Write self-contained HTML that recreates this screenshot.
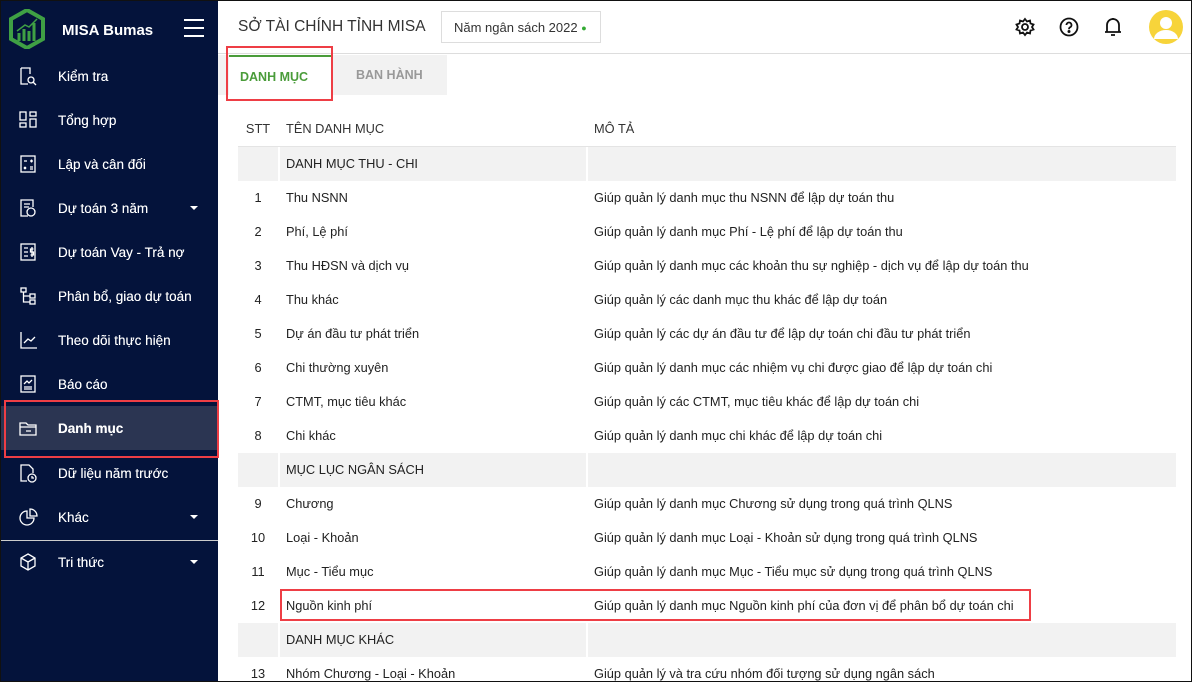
<!DOCTYPE html>
<html><head><meta charset="utf-8"><style>
*{margin:0;padding:0;box-sizing:border-box}
body{width:1192px;height:682px;overflow:hidden;font-family:"Liberation Sans",sans-serif;background:#fff;position:relative;color:#222}
.frame{position:absolute;inset:0;border:1px solid #111;z-index:10;pointer-events:none}
.side{position:absolute;left:0;top:0;width:218px;height:682px;background:#04133b;color:#fff}
.logo{position:absolute;left:9px;top:9px}
.brand{position:absolute;left:62px;top:22px;font-weight:bold;font-size:15px}
.ham{position:absolute;left:184px;top:19px;width:20px}
.ham i{display:block;height:2px;background:#fff;margin-bottom:6px}
.item{position:absolute;left:0;width:218px;height:44px;font-size:13.5px;display:flex;align-items:center;text-shadow:0 0 .3px #fff}
.item span{position:absolute;left:58px}
.item svg{position:absolute;left:18px}
.item .car{position:absolute;left:190px;width:0;height:0;border-left:4px solid transparent;border-right:4px solid transparent;border-top:4px solid #fff}
.sel{background:#2b3552;font-weight:bold}
.hdr{position:absolute;left:218px;top:0;right:0;height:54px;border-bottom:1px solid #ddd}
.title{position:absolute;left:20px;top:18px;font-size:15.5px;color:#333}
.year{position:absolute;left:223px;top:11px;width:160px;height:32px;border:1px solid #ddd;font-size:13px;padding:8px 12px;color:#333;white-space:nowrap}
.tabs{position:absolute;left:218px;top:55px;width:229px;height:40px;background:#f2f2f2}
.t1{position:absolute;left:11px;top:0;width:102px;height:40px;border-top:2px solid #4a9c3a;background:#fff;color:#4a9c3a;font-weight:bold;font-size:12.5px;padding-top:13px;padding-left:11px}
.t2{position:absolute;left:138px;top:13px;color:#999;font-weight:bold;font-size:12.5px}
.tbl{position:absolute;left:238px;top:111px;width:938px;font-size:12.8px}
.r{position:relative;height:34px;line-height:34px}
.r .a{position:absolute;left:0;width:40px;text-align:center}
.r .b{position:absolute;left:48px}
.r .c{position:absolute;left:356px}
.g{background:#f2f2f2}
.g .b{border-left:2px solid #fff;left:40px;padding-left:6px;width:308px;height:34px}
.g .c{border-left:2px solid #fff;left:348px;width:2px;height:34px}
.hd{height:36px;line-height:36px;border-bottom:1px solid #e4e4e4;color:#333}
.box{position:absolute;border:2px solid #ee3e45;z-index:5}
</style></head><body>
<div class="side">
<svg class="logo" width="36" height="40" viewBox="0 0 36 40"><path d="M18 1 L34 10 V30 L18 39 L2 30 V10 Z" fill="none" stroke="#3fa044" stroke-width="4"/><path d="M10 32V24M15 32V20M20 32V22M25 32V14" stroke="#3fa044" stroke-width="3"/><path d="M8 22 L16 16 L20 18 L28 10" stroke="#3fa044" stroke-width="1.5" fill="none"/></svg>
<div class="brand">MISA Bumas</div>
<div class="ham"><i></i><i></i><i></i></div>
<div class="item" style="top:54px"><svg width="20" height="20" fill="none" stroke="#fff" stroke-width="1.3"><path d="M3 2h9v6M3 2v16h7"/><circle cx="13" cy="14" r="3"/><path d="M15 16l3 3"/></svg><span>Kiểm tra</span></div>
<div class="item" style="top:98px"><svg width="20" height="20" fill="none" stroke="#fff" stroke-width="1.3"><rect x="2" y="2" width="6" height="8"/><rect x="12" y="2" width="6" height="4"/><rect x="2" y="13" width="6" height="4"/><rect x="12" y="9" width="6" height="8"/></svg><span>Tổng hợp</span></div>
<div class="item" style="top:142px"><svg width="20" height="20" fill="none" stroke="#fff" stroke-width="1.3"><rect x="3" y="2" width="14" height="16"/><path d="M6 7h3M12 7h3M13.5 5.5v3M6 13l2 2M8 13l-2 2M12 13h3M12 15h3"/></svg><span>Lập và cân đối</span></div>
<div class="item" style="top:186px"><svg width="20" height="20" fill="none" stroke="#fff" stroke-width="1.3"><path d="M10 18H3V2h12v7M6 6h6M6 9h5"/><circle cx="13" cy="14" r="4"/></svg><span>Dự toán 3 năm</span><i class="car"></i></div>
<div class="item" style="top:230px"><svg width="20" height="20" fill="none" stroke="#fff" stroke-width="1.3"><rect x="3" y="2" width="14" height="16"/><path d="M6 6h4M6 10h4M6 14h4M14 5v10M15.5 7h-3v3h3v3h-3"/></svg><span>Dự toán Vay - Trả nợ</span></div>
<div class="item" style="top:274px"><svg width="20" height="20" fill="none" stroke="#fff" stroke-width="1.3"><rect x="3" y="2" width="5" height="4"/><path d="M5.5 6v10h6M5.5 10h6"/><rect x="12" y="8" width="5" height="4"/><rect x="12" y="14" width="5" height="4"/></svg><span>Phân bổ, giao dự toán</span></div>
<div class="item" style="top:318px"><svg width="20" height="20" fill="none" stroke="#fff" stroke-width="1.3"><path d="M3 2v16h16M6 13l4-4 3 2 4-4"/></svg><span>Theo dõi thực hiện</span></div>
<div class="item" style="top:362px"><svg width="20" height="20" fill="none" stroke="#fff" stroke-width="1.3"><rect x="3" y="2" width="14" height="16"/><path d="M6 10l3-3 2 2 3-3M6 13h8M6 15h8"/></svg><span>Báo cáo</span></div>
<div class="item sel" style="top:406px"><svg width="20" height="20" fill="none" stroke="#fff" stroke-width="1.3"><path d="M2 17V5h6l2 2h8v10z M2 9h16M8 13h5"/></svg><span>Danh mục</span></div>
<div class="item" style="top:451px"><svg width="20" height="20" fill="none" stroke="#fff" stroke-width="1.3"><path d="M9 18H3V2h8l4 4v4"/><circle cx="14" cy="15" r="4"/><path d="M14 13v2h2"/></svg><span>Dữ liệu năm trước</span></div>
<div class="item" style="top:495px"><svg width="20" height="20" fill="none" stroke="#fff" stroke-width="1.3"><path d="M9 4a7 7 0 1 0 7 7H9z M12 2v7h7a7 7 0 0 0-7-7z"/></svg><span>Khác</span><i class="car"></i></div>
<div style="position:absolute;left:0;top:540px;width:218px;height:1px;background:#ccc"></div>
<div class="item" style="top:540px"><svg width="20" height="20" fill="none" stroke="#fff" stroke-width="1.3"><path d="M10 2l7 4v8l-7 4-7-4V6z M3 6l7 4 7-4M10 10v8"/></svg><span>Tri thức</span><i class="car"></i></div>
</div>
<div class="hdr">
<div class="title">SỞ TÀI CHÍNH TỈNH MISA</div>
<div class="year">Năm ngân sách 2022 <span style="color:#3a3;font-size:9px;vertical-align:1px">●</span></div>
<svg style="position:absolute;left:797px;top:17px" width="20" height="20" fill="none" stroke="#111" stroke-width="1.8"><circle cx="10" cy="10" r="3"/><path d="M10 2l2 2.5 3-1 .5 3 3 1-1.5 2.5 1.5 2.5-3 1-.5 3-3-1-2 2.5-2-2.5-3 1-.5-3-3-1L3 10 1.5 7.5l3-1 .5-3 3 1z"/></svg>
<svg style="position:absolute;left:841px;top:17px" width="20" height="20" fill="none" stroke="#111" stroke-width="1.8"><circle cx="10" cy="10" r="8.5"/><path d="M7.5 8a2.5 2.5 0 1 1 3.5 2.3c-.8.4-1 1-1 2"/><circle cx="10" cy="14.5" r=".6" fill="#111"/></svg>
<svg style="position:absolute;left:885px;top:16px" width="20" height="22" fill="none" stroke="#111" stroke-width="1.8"><path d="M4 16V9a6 6 0 0 1 12 0v7zM2 16h16M8 19h4M10 2v1"/></svg>
<svg style="position:absolute;left:931px;top:10px" width="34" height="34"><circle cx="17" cy="17" r="17" fill="#f7d43a"/><circle cx="17" cy="13" r="6" fill="#fff"/><path d="M5 29a12 9 0 0 1 24 0z" fill="#fff"/></svg>
</div>
<div class="tabs"><div class="t1">DANH MỤC</div><div class="t2">BAN HÀNH</div></div>
<div class="tbl">
<div class="r hd"><span class="a">STT</span><span class="b">TÊN DANH MỤC</span><span class="c">MÔ TẢ</span></div>
<div class="r g"><span class="b">DANH MỤC THU - CHI</span><span class="c"></span></div>
<div class="r"><span class="a">1</span><span class="b">Thu NSNN</span><span class="c">Giúp quản lý danh mục thu NSNN để lập dự toán thu</span></div>
<div class="r"><span class="a">2</span><span class="b">Phí, Lệ phí</span><span class="c">Giúp quản lý danh mục Phí - Lệ phí để lập dự toán thu</span></div>
<div class="r"><span class="a">3</span><span class="b">Thu HĐSN và dịch vụ</span><span class="c">Giúp quản lý danh mục các khoản thu sự nghiệp - dịch vụ để lập dự toán thu</span></div>
<div class="r"><span class="a">4</span><span class="b">Thu khác</span><span class="c">Giúp quản lý các danh mục thu khác để lập dự toán</span></div>
<div class="r"><span class="a">5</span><span class="b">Dự án đầu tư phát triển</span><span class="c">Giúp quản lý các dự án đầu tư để lập dự toán chi đầu tư phát triển</span></div>
<div class="r"><span class="a">6</span><span class="b">Chi thường xuyên</span><span class="c">Giúp quản lý danh mục các nhiệm vụ chi được giao để lập dự toán chi</span></div>
<div class="r"><span class="a">7</span><span class="b">CTMT, mục tiêu khác</span><span class="c">Giúp quản lý các CTMT, mục tiêu khác để lập dự toán chi</span></div>
<div class="r"><span class="a">8</span><span class="b">Chi khác</span><span class="c">Giúp quản lý danh mục chi khác để lập dự toán chi</span></div>
<div class="r g"><span class="b">MỤC LỤC NGÂN SÁCH</span><span class="c"></span></div>
<div class="r"><span class="a">9</span><span class="b">Chương</span><span class="c">Giúp quản lý danh mục Chương sử dụng trong quá trình QLNS</span></div>
<div class="r"><span class="a">10</span><span class="b">Loại - Khoản</span><span class="c">Giúp quản lý danh mục Loại - Khoản sử dụng trong quá trình QLNS</span></div>
<div class="r"><span class="a">11</span><span class="b">Mục - Tiểu mục</span><span class="c">Giúp quản lý danh mục Mục - Tiểu mục sử dụng trong quá trình QLNS</span></div>
<div class="r"><span class="a">12</span><span class="b">Nguồn kinh phí</span><span class="c">Giúp quản lý danh mục Nguồn kinh phí của đơn vị để phân bổ dự toán chi</span></div>
<div class="r g"><span class="b">DANH MỤC KHÁC</span><span class="c"></span></div>
<div class="r"><span class="a">13</span><span class="b">Nhóm Chương - Loại - Khoản</span><span class="c">Giúp quản lý và tra cứu nhóm đối tượng sử dụng ngân sách</span></div>
</div>
<div class="box" style="left:226px;top:46px;width:107px;height:55px"></div>
<div class="box" style="left:4px;top:400px;width:215px;height:58px"></div>
<div class="box" style="left:280px;top:589px;width:751px;height:32px"></div>
<div class="frame"></div>
</body></html>
